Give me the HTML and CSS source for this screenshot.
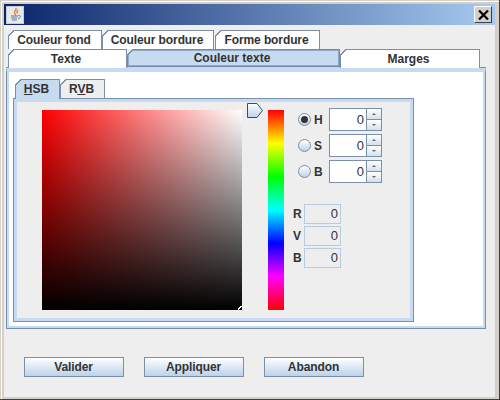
FILE: index.html
```html
<!DOCTYPE html>
<html lang="fr">
<head>
    <meta charset="UTF-8">
    <title>Couleur texte</title>
    <link rel="stylesheet" href="styles.css">
</head>
<body>

<div class="window">
    <div class="titlebar">
        <span class="app-icon">
            <svg width="15" height="15" viewBox="0 0 15 15">
                <path d="M8 1C9 3 6 4 6.500 6C7 7 8 7.500 7.500 8.500M10 3C9 4 8.500 5 9.500 6.500" fill="none" stroke="#d9822b" stroke-width="1.300"/>
                <path d="M3 9H10M3 11H9M4 13H9" stroke="#5a7a9c" stroke-width="1"/>
                <path d="M10.500 8.500C13 8 13.500 10.500 10 11.500" fill="none" stroke="#5a7a9c" stroke-width="1"/>
            </svg>
        </span>
        <button class="close-btn" type="button">
            <svg width="11" height="10" viewBox="0 0 11 10">
                <path d="M1 0.500L10 9.500M10 0.500L1 9.500" stroke="#000" stroke-width="2.200"/>
            </svg>
        </button>
    </div>

    <div class="content">
        <div class="tab-row back-row">
            <div class="tab w-fond">Couleur fond</div>
            <div class="tab w-bordure">Couleur bordure</div>
            <div class="tab w-forme">Forme bordure</div>
        </div>
        <div class="tab-row front-row">
            <div class="tab w-texte">Texte</div>
            <div class="tab active w-couleur">Couleur texte</div>
            <div class="tab w-marges">Marges</div>
        </div>

        <div class="panel">
            <div class="inner-tabs">
                <div class="tab inner-tab inner-active"><span><u>H</u>SB</span></div>
                <div class="tab inner-tab"><span>R<u>V</u>B</span></div>
            </div>

            <div class="inner-panel">
                <div class="color-square"><i class="corner-mark"></i></div>

                <div class="hue-col">
                    <svg class="thumb" width="16" height="15" viewBox="0 0 16 15">
                        <defs>
                            <linearGradient id="thumbFill" x1="0" y1="0" x2="0" y2="1">
                                <stop offset="0" stop-color="#ffffff"/>
                                <stop offset="1" stop-color="#bcd2ea"/>
                            </linearGradient>
                        </defs>
                        <path d="M0.500 0.500H10L15.500 7.500L10 14.500H0.500Z" fill="url(#thumbFill)" stroke="#3c4a5c"/>
                    </svg>
                    <div class="hue-strip"></div>
                </div>

                <div class="controls">
                    <div class="hsb-row">
                        <span class="radio checked"></span>
                        <span class="hsb-label">H</span>
                        <div class="spinner"><span class="spin-value">0</span><span class="spin-btns"><i class="up"></i><i class="down"></i></span></div>
                    </div>
                    <div class="hsb-row">
                        <span class="radio"></span>
                        <span class="hsb-label">S</span>
                        <div class="spinner"><span class="spin-value">0</span><span class="spin-btns"><i class="up"></i><i class="down"></i></span></div>
                    </div>
                    <div class="hsb-row">
                        <span class="radio"></span>
                        <span class="hsb-label">B</span>
                        <div class="spinner"><span class="spin-value">0</span><span class="spin-btns"><i class="up"></i><i class="down"></i></span></div>
                    </div>

                    <div class="rvb-block">
                        <div class="rvb-row"><span class="rvb-label">R</span><span class="rvb-field">0</span></div>
                        <div class="rvb-row"><span class="rvb-label">V</span><span class="rvb-field">0</span></div>
                        <div class="rvb-row"><span class="rvb-label">B</span><span class="rvb-field">0</span></div>
                    </div>
                </div>
            </div>
        </div>

        <div class="actions">
            <button class="action-btn" type="button">Valider</button>
            <button class="action-btn" type="button">Appliquer</button>
            <button class="action-btn" type="button">Abandon</button>
        </div>
    </div>
</div>

</body>
</html>
```
FILE: styles.css
```css
html, body {
    margin: 0;
    padding: 0;
}
body {
    width: 500px;
    height: 400px;
    overflow: hidden;
    font-family: "Liberation Sans", Arial, sans-serif;
    font-size: 12px;
    font-weight: bold;
    color: #333333;
}
.window {
    box-sizing: border-box;
    width: 500px;
    height: 400px;
    padding: 4px 4px 2px 4px;
    background: #d4d0c8;
    border-right: 1px solid #404040;
    border-bottom: 1px solid #404040;
    box-shadow: inset 1px 1px 0 #d4d0c8, inset 2px 2px 0 #ffffff;
    display: flex;
    flex-direction: column;
}

/* title bar */
.titlebar {
    height: 21px;
    flex: none;
    display: flex;
    align-items: center;
    justify-content: space-between;
    padding: 0 3px 0 2px;
    background: linear-gradient(to right, #0a246a, #a6caf0);
}
.app-icon {
    box-sizing: border-box;
    width: 18px;
    height: 18px;
    display: flex;
    align-items: center;
    justify-content: center;
    background: #e8e8e8;
    border: 1px solid #c8ccd4;
}
.close-btn {
    box-sizing: border-box;
    width: 18px;
    height: 17px;
    padding: 0;
    display: flex;
    align-items: center;
    justify-content: center;
    background: #d4d0c8;
    border: 1px solid;
    border-color: #ffffff #404040 #404040 #ffffff;
}

.content {
    flex: 1;
    background: #eeeeee;
    padding-top: 5px;
}

/* tabs */
.tab-row {
    display: flex;
    height: 19px;
    margin-left: 4px;
}
.tab {
    box-sizing: border-box;
    position: relative;
    height: 19px;
    line-height: 18px;
    padding-right: 3px;
    text-align: center;
    background: #ffffff;
    border: 1px solid #7a8fa8;
    border-bottom: none;
}
.tab::before {
    content: "";
    position: absolute;
    left: -1px;
    top: -1px;
    width: 7px;
    height: 7px;
    background: linear-gradient(135deg, #eeeeee 4px, #7a8fa8 4px, #7a8fa8 5px, transparent 5px);
}
.back-row .tab {
    padding-right: 2px;
    letter-spacing: -0.1px;
}
.w-fond { width: 94px; }
.w-bordure { width: 112px; }
.w-forme { width: 105px; margin-left: 1px; }
.w-texte { width: 119px; }
.w-couleur { width: 213px; }
.w-marges { width: 140px; }
.active {
    z-index: 1;
    height: 18px;
    line-height: 16px;
    background: #c8daf0;
    border: 1px solid #6d8ab0;
    box-shadow: inset 0 0 0 1px #8fa9c9, 0 2px 0 #c8daf0;
}

.panel {
    box-sizing: border-box;
    width: 480px;
    height: 261px;
    margin-left: 2px;
    padding: 7px 0 0 6px;
    background: #ffffff;
    border: 1px solid #7a8fa8;
    border-top: 4px solid #c8daf0;
    box-shadow: inset 2px 0 0 #c8daf0, inset -2px 0 0 #c8daf0, inset 0 -2px 0 #c8daf0, 0 -1px 0 #7a8fa8;
}
.inner-tabs {
    display: flex;
    height: 19px;
    margin-left: 2px;
    position: relative;
}
.inner-tab {
    width: 45px;
    height: 19px;
    padding-right: 2px;
    background: #eeeeee;
}
.inner-tab::before {
    background: linear-gradient(135deg, #ffffff 4px, #7a8fa8 4px, #7a8fa8 5px, transparent 5px);
}
.inner-active {
    z-index: 1;
    height: 20px;
    background: #c8daf0;
    border-width: 1px;
}
.inner-panel {
    box-sizing: border-box;
    width: 401px;
    height: 224px;
    display: flex;
    background: #eeeeee;
    border: 1px solid #7a8fa8;
    padding: 11px 0 0 28px;
    box-shadow: inset 0 0 0 3px #c8daf0;
}

/* color chooser */
.color-square {
    position: relative;
    width: 200px;
    height: 200px;
    flex: none;
    background: linear-gradient(to bottom, transparent, #000000), linear-gradient(to right, #ff0000, #ffffff);
}
.corner-mark {
    position: absolute;
    right: 0;
    bottom: 0;
    width: 4px;
    height: 4px;
    background: linear-gradient(135deg, transparent 1.500px, #ffffff 1.500px, #ffffff 3px, transparent 3px);
}
.hue-col {
    position: relative;
    width: 16px;
    height: 200px;
    margin-left: 26px;
    flex: none;
}
.thumb {
    position: absolute;
    left: -21px;
    top: -7px;
}
.hue-strip {
    width: 16px;
    height: 200px;
    background: linear-gradient(to bottom, #ff0000, #ffff00, #00ff00, #00ffff, #0000ff, #ff00ff, #ff0000);
}
.controls {
    margin-left: 9px;
    margin-top: -2px;
    display: flex;
    flex-direction: column;
    font-size: 12px;
}
.hsb-row {
    display: flex;
    align-items: center;
    height: 23px;
    margin-bottom: 3px;
    padding-left: 5px;
}
.radio {
    box-sizing: border-box;
    position: relative;
    width: 13px;
    height: 13px;
    border-radius: 50%;
    border: 1px solid #7a8fa8;
    background: linear-gradient(to bottom, #ffffff, #bcd2ea);
}
.radio.checked::after {
    content: "";
    position: absolute;
    left: 2px;
    top: 2px;
    width: 7px;
    height: 7px;
    border-radius: 50%;
    background: #333333;
}
.hsb-label {
    width: 18px;
    padding-left: 3px;
    box-sizing: border-box;
}
.spinner {
    box-sizing: border-box;
    width: 53px;
    height: 23px;
    display: flex;
    background: #ffffff;
    border: 1px solid #7a8fa8;
    border-right: none;
}
.spin-value {
    flex: 1;
    text-align: right;
    padding-right: 2px;
    line-height: 21px;
    font-weight: normal;
    font-size: 13px;
}
.spin-btns {
    box-sizing: border-box;
    width: 16px;
    height: 23px;
    margin-top: -1px;
    display: flex;
    flex-direction: column;
    border: 1px solid #7a8fa8;
    background: #7a8fa8;
    gap: 1px;
}
.spin-btns i {
    position: relative;
    flex: 1;
    background: linear-gradient(to bottom, #ffffff, #d4e0ee);
}
.spin-btns i::after {
    content: "";
    position: absolute;
    left: 5px;
    top: 4px;
    border-left: 2px solid transparent;
    border-right: 2px solid transparent;
}
.spin-btns .up::after {
    border-bottom: 2px solid #666666;
}
.spin-btns .down::after {
    border-top: 2px solid #666666;
}
.rvb-block {
    margin-top: 18px;
    display: flex;
    flex-direction: column;
    gap: 2px;
}
.rvb-row {
    display: flex;
    align-items: center;
    height: 20px;
}
.rvb-label {
    width: 11px;
}
.rvb-field {
    box-sizing: border-box;
    width: 37px;
    height: 20px;
    line-height: 18px;
    text-align: right;
    padding-right: 2px;
    font-weight: normal;
    font-size: 13px;
    border: 1px solid #b8cce0;
}

/* bottom buttons */
.actions {
    display: flex;
    gap: 20px;
    margin: 28px 0 0 20px;
}
.action-btn {
    box-sizing: border-box;
    width: 100px;
    height: 20px;
    padding: 0 1px 0 0;
    font-family: inherit;
    font-size: 12px;
    font-weight: bold;
    letter-spacing: -0.1px;
    color: #333333;
    background: linear-gradient(to bottom, #ffffff, #bcd2ea);
    border: 1px solid #7a8fa8;
}
```
